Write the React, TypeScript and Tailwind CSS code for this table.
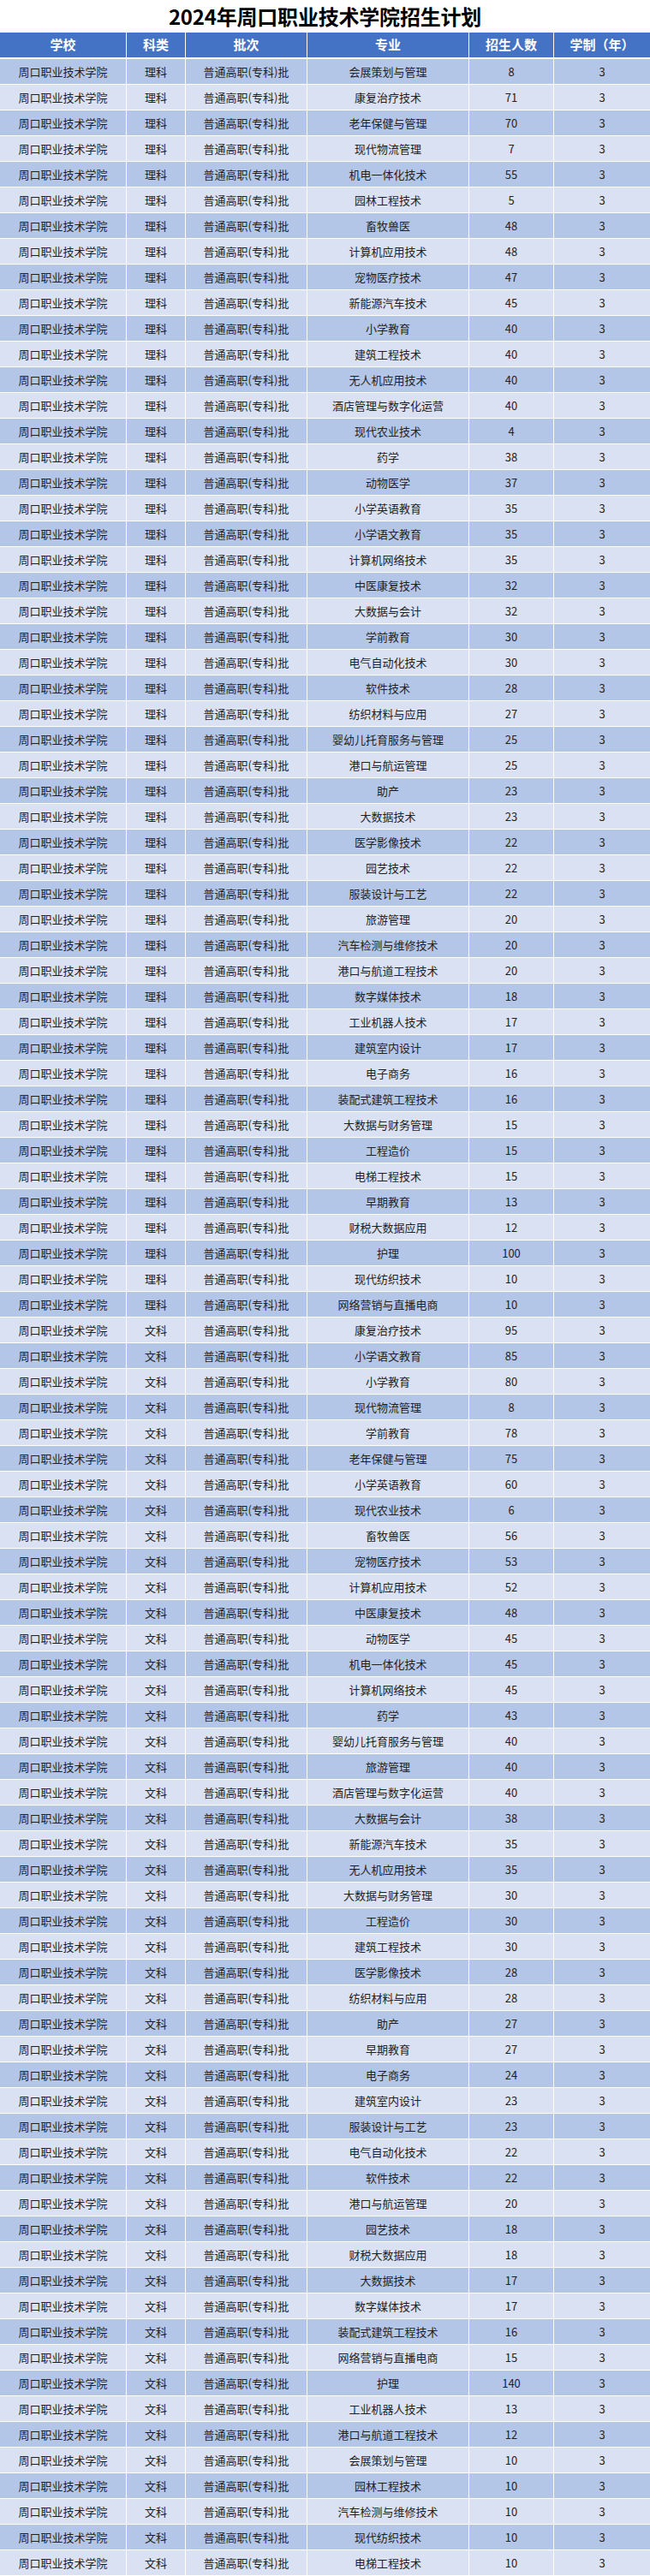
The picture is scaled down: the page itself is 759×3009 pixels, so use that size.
import React from "react";

const li: [string, number][] = [
  ["会展策划与管理", 8],
  ["康复治疗技术", 71],
  ["老年保健与管理", 70],
  ["现代物流管理", 7],
  ["机电一体化技术", 55],
  ["园林工程技术", 5],
  ["畜牧兽医", 48],
  ["计算机应用技术", 48],
  ["宠物医疗技术", 47],
  ["新能源汽车技术", 45],
  ["小学教育", 40],
  ["建筑工程技术", 40],
  ["无人机应用技术", 40],
  ["酒店管理与数字化运营", 40],
  ["现代农业技术", 4],
  ["药学", 38],
  ["动物医学", 37],
  ["小学英语教育", 35],
  ["小学语文教育", 35],
  ["计算机网络技术", 35],
  ["中医康复技术", 32],
  ["大数据与会计", 32],
  ["学前教育", 30],
  ["电气自动化技术", 30],
  ["软件技术", 28],
  ["纺织材料与应用", 27],
  ["婴幼儿托育服务与管理", 25],
  ["港口与航运管理", 25],
  ["助产", 23],
  ["大数据技术", 23],
  ["医学影像技术", 22],
  ["园艺技术", 22],
  ["服装设计与工艺", 22],
  ["旅游管理", 20],
  ["汽车检测与维修技术", 20],
  ["港口与航道工程技术", 20],
  ["数字媒体技术", 18],
  ["工业机器人技术", 17],
  ["建筑室内设计", 17],
  ["电子商务", 16],
  ["装配式建筑工程技术", 16],
  ["大数据与财务管理", 15],
  ["工程造价", 15],
  ["电梯工程技术", 15],
  ["早期教育", 13],
  ["财税大数据应用", 12],
  ["护理", 100],
  ["现代纺织技术", 10],
  ["网络营销与直播电商", 10],
];

const wen: [string, number][] = [
  ["康复治疗技术", 95],
  ["小学语文教育", 85],
  ["小学教育", 80],
  ["现代物流管理", 8],
  ["学前教育", 78],
  ["老年保健与管理", 75],
  ["小学英语教育", 60],
  ["现代农业技术", 6],
  ["畜牧兽医", 56],
  ["宠物医疗技术", 53],
  ["计算机应用技术", 52],
  ["中医康复技术", 48],
  ["动物医学", 45],
  ["机电一体化技术", 45],
  ["计算机网络技术", 45],
  ["药学", 43],
  ["婴幼儿托育服务与管理", 40],
  ["旅游管理", 40],
  ["酒店管理与数字化运营", 40],
  ["大数据与会计", 38],
  ["新能源汽车技术", 35],
  ["无人机应用技术", 35],
  ["大数据与财务管理", 30],
  ["工程造价", 30],
  ["建筑工程技术", 30],
  ["医学影像技术", 28],
  ["纺织材料与应用", 28],
  ["助产", 27],
  ["早期教育", 27],
  ["电子商务", 24],
  ["建筑室内设计", 23],
  ["服装设计与工艺", 23],
  ["电气自动化技术", 22],
  ["软件技术", 22],
  ["港口与航运管理", 20],
  ["园艺技术", 18],
  ["财税大数据应用", 18],
  ["大数据技术", 17],
  ["数字媒体技术", 17],
  ["装配式建筑工程技术", 16],
  ["网络营销与直播电商", 15],
  ["护理", 140],
  ["工业机器人技术", 13],
  ["港口与航道工程技术", 12],
  ["会展策划与管理", 10],
  ["园林工程技术", 10],
  ["汽车检测与维修技术", 10],
  ["现代纺织技术", 10],
  ["电梯工程技术", 10],
];

const rows: { kl: string; major: string; n: number }[] = [
  ...li.map(([major, n]) => ({ kl: "理科", major, n })),
  ...wen.map(([major, n]) => ({ kl: "文科", major, n })),
];

const gridCols =
  "grid grid-cols-[147px_68px_141px_188px_98px_1fr] gap-x-px";

export default function App() {
  return (
    <div
      className="w-[759px] bg-white"
      style={{ fontFamily: '"Noto Sans CJK SC", "Noto Sans", sans-serif' }}
    >
      <div className="h-[38px] flex items-center justify-center">
        <h1 className="text-[24px] leading-none font-bold text-black tracking-[-0.2px]">
          2024年周口职业技术学院招生计划
        </h1>
      </div>
      <div className={`${gridCols} h-[29px] text-white font-bold text-[15px]`}>
        {["学校", "科类", "批次", "专业", "招生人数", "学制（年）"].map((h) => (
          <div key={h} className="bg-[#4472c4] flex items-center justify-center">
            {h}
          </div>
        ))}
      </div>
      <div className="flex flex-col gap-y-px mt-[2px]">
        {rows.map((r, i) => {
          const bg = i % 2 === 0 ? "bg-[#b4c6e7]" : "bg-[#d9e1f2]";
          const cells = ["周口职业技术学院", r.kl, "普通高职(专科)批", r.major, String(r.n), "3"];
          return (
            <div key={i} className={`${gridCols} h-[29px] text-[13px] text-[#1f1f1f]`}>
              {cells.map((c, j) => (
                <div key={j} className={`${bg} flex items-center justify-center whitespace-nowrap`}>
                  {c}
                </div>
              ))}
            </div>
          );
        })}
      </div>
    </div>
  );
}
